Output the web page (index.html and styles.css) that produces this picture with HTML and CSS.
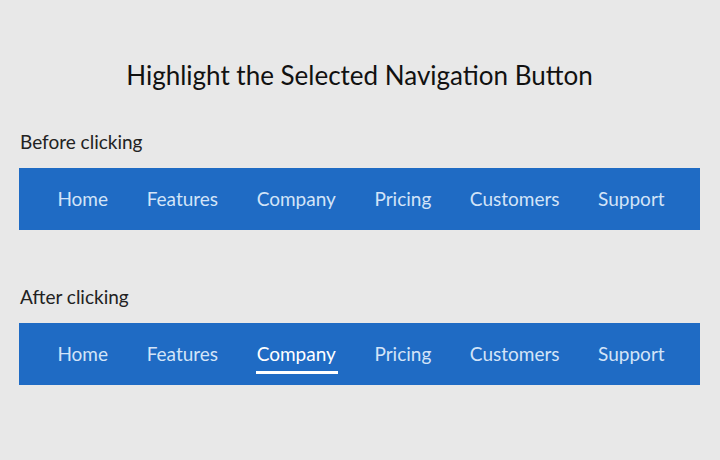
FILE: index.html
```html
<!DOCTYPE html>
<html lang="en">
<head>
  <meta charset="UTF-8">
  <meta name="viewport" content="width=device-width, initial-scale=1.0">
  <title>Highlight the Selected Navigation Button</title>
  <link rel="stylesheet" href="styles.css">
</head>
<body>
  <div class="page">
    <h1>Highlight the Selected Navigation Button</h1>

    <p class="label">Before clicking</p>
    <nav class="navbar">
      <a href="#">Home</a>
      <a href="#">Features</a>
      <a href="#">Company</a>
      <a href="#">Pricing</a>
      <a href="#">Customers</a>
      <a href="#">Support</a>
    </nav>

    <p class="label after">After clicking</p>
    <nav class="navbar">
      <a href="#">Home</a>
      <a href="#">Features</a>
      <a href="#" class="active">Company</a>
      <a href="#">Pricing</a>
      <a href="#">Customers</a>
      <a href="#">Support</a>
    </nav>
  </div>
</body>
</html>
```

FILE: styles.css
```css
body {
  margin: 0;
  background-color: #e8e8e8;
  font-family: Lato, "Open Sans", sans-serif;
  color: #1a1a1a;
}

.page {
  padding: 59px 20px 0 19px;
}

h1 {
  margin: 0 0 39px;
  text-align: center;
  font-size: 26px;
  font-weight: 400;
  line-height: 32px;
  color: #111;
}

.label {
  margin: 0 0 14px 1px;
  font-size: 19px;
  line-height: 24px;
  color: #222;
}

.label.after {
  margin-top: 55px;
}

.navbar {
  display: flex;
  justify-content: center;
  gap: 38.6px;
  height: 62px;
  padding: 0 0 2px 3px;
  box-sizing: border-box;
  background-color: #1f6bc4;
}

.navbar a {
  position: relative;
  display: flex;
  align-items: center;
  font-size: 19px;
  color: #d3e4f8;
  text-decoration: none;
}

.navbar a.active {
  color: #fff;
}

.navbar a.active::after {
  content: "";
  position: absolute;
  left: -1px;
  right: -2px;
  bottom: 9px;
  height: 3px;
  background-color: #fff;
}
```
